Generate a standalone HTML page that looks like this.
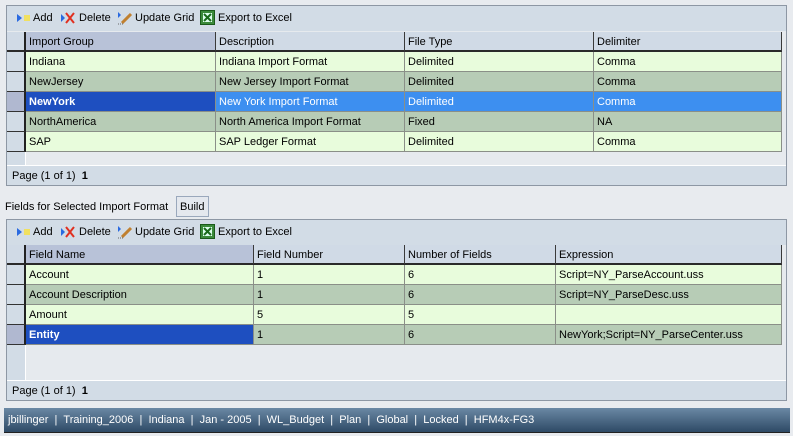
<!DOCTYPE html>
<html><head><style>
*{margin:0;padding:0;box-sizing:border-box}
body{width:793px;height:436px;background:#e8ebef;font-family:"Liberation Sans",sans-serif;font-size:11px;color:#000;position:relative;overflow:hidden}
.a{position:absolute}
.panel{position:absolute;left:6px;width:781px;border:1px solid #8d97a4;background:#e6eaee}
.tb{position:absolute;left:0;right:0;top:0;height:25px;background:#d2dce6}
.tb span{position:absolute;top:6px;font-size:11px}
.tb svg{margin-top:1px}
.foot{position:absolute;left:0;right:0;bottom:0;height:20px;background:#d2dce6;border-top:1px solid #fff}
.foot span{position:absolute;left:5px;top:4px}
.sel{position:absolute;left:0;width:19px;background:#d2dce6;border-right:1px solid #fff}
.c{position:absolute;height:20px;border-right:1px solid #8a8f88;border-bottom:1px solid #8a8f88;padding:4px 0 0 3px;white-space:nowrap;overflow:hidden}
.h{background:#d0dae6;border-right:1px solid #3a3a3a;border-bottom:2px solid #2a2a2a}
.rs{position:absolute;left:0;width:19px;height:20px;background:#d2dce6;border-right:2px solid #222;border-bottom:1px solid #333}
.g1{background:#e8fcdc}.g2{background:#b7ccb6}
</style></head><body>

<div class="panel" style="top:5px;height:181px">
  <div class="tb">
    <svg class="a" style="left:10px;top:6px" width="14" height="10"><path d="M0 1L5 5L0 9Z" fill="#2a6ae0"/><rect x="7" y="2" width="6" height="6" fill="#f0e060"/></svg>
    <span style="left:26px">Add</span>
    <svg class="a" style="left:54px;top:5px" width="14" height="12"><path d="M0 2L4 6L0 10Z" fill="#2a6ae0"/><path d="M5 1L13 11M13 1L5 11" stroke="#e03020" stroke-width="2"/></svg>
    <span style="left:72px">Delete</span>
    <svg class="a" style="left:110px;top:4px" width="16" height="14"><path d="M1 1L4 4L1 7Z" fill="#2a6ae0"/><path d="M5 12L14 3" stroke="#c08030" stroke-width="3"/><path d="M1 13h6" stroke="#666" stroke-dasharray="1 1"/></svg>
    <span style="left:128px">Update Grid</span>
    <svg class="a" style="left:193px;top:3px" width="15" height="15"><rect x="0.5" y="0.5" width="14" height="14" fill="#3a8a3a" stroke="#1a5a1a"/><rect x="3" y="3" width="9" height="9" fill="#dfe"/><path d="M4 4L11 11M11 4L4 11" stroke="#1a6a1a" stroke-width="2"/></svg>
    <span style="left:211px">Export to Excel</span>
  </div>
  <div class="sel" style="top:26px;height:133px"></div>
  <div class="c h" style="top:26px;left:0;width:19px;border-right:2px solid #222"></div>
  <div class="c h" style="top:26px;left:19px;width:190px;background:#b8c2d8">Import Group</div>
  <div class="c h" style="top:26px;left:209px;width:189px">Description</div>
  <div class="c h" style="top:26px;left:398px;width:189px">File Type</div>
  <div class="c h" style="top:26px;left:587px;width:188px">Delimiter</div>

  <div class="rs" style="top:46px"></div>
  <div class="c g1" style="top:46px;left:19px;width:190px">Indiana</div>
  <div class="c g1" style="top:46px;left:209px;width:189px">Indiana Import Format</div>
  <div class="c g1" style="top:46px;left:398px;width:189px">Delimited</div>
  <div class="c g1" style="top:46px;left:587px;width:188px">Comma</div>

  <div class="rs" style="top:66px"></div>
  <div class="c g2" style="top:66px;left:19px;width:190px">NewJersey</div>
  <div class="c g2" style="top:66px;left:209px;width:189px">New Jersey Import Format</div>
  <div class="c g2" style="top:66px;left:398px;width:189px">Delimited</div>
  <div class="c g2" style="top:66px;left:587px;width:188px">Comma</div>

  <div class="rs" style="top:86px;background:#b0b8d0"></div>
  <div class="c" style="top:86px;left:19px;width:190px;background:#1e4fc0;color:#fff;font-weight:bold">NewYork</div>
  <div class="c" style="top:86px;left:209px;width:189px;background:#3d8ff0;color:#fff">New York Import Format</div>
  <div class="c" style="top:86px;left:398px;width:189px;background:#3d8ff0;color:#fff">Delimited</div>
  <div class="c" style="top:86px;left:587px;width:188px;background:#3d8ff0;color:#fff">Comma</div>

  <div class="rs" style="top:106px"></div>
  <div class="c g2" style="top:106px;left:19px;width:190px">NorthAmerica</div>
  <div class="c g2" style="top:106px;left:209px;width:189px">North America Import Format</div>
  <div class="c g2" style="top:106px;left:398px;width:189px">Fixed</div>
  <div class="c g2" style="top:106px;left:587px;width:188px">NA</div>

  <div class="rs" style="top:126px"></div>
  <div class="c g1" style="top:126px;left:19px;width:190px">SAP</div>
  <div class="c g1" style="top:126px;left:209px;width:189px">SAP Ledger Format</div>
  <div class="c g1" style="top:126px;left:398px;width:189px">Delimited</div>
  <div class="c g1" style="top:126px;left:587px;width:188px">Comma</div>

  <div class="foot"><span>Page (1 of 1) &nbsp;<b>1</b></span></div>
</div>

<div class="a" style="left:5px;top:201px">Fields for Selected Import Format</div>
<div class="a" style="left:176px;top:196px;width:33px;height:21px;background:#e4e8ee;border:1px solid #9aa8bc;padding:4px 0 0 3px">Build</div>

<div class="panel" style="top:219px;height:182px">
  <div class="tb">
    <svg class="a" style="left:10px;top:6px" width="14" height="10"><path d="M0 1L5 5L0 9Z" fill="#2a6ae0"/><rect x="7" y="2" width="6" height="6" fill="#f0e060"/></svg>
    <span style="left:26px">Add</span>
    <svg class="a" style="left:54px;top:5px" width="14" height="12"><path d="M0 2L4 6L0 10Z" fill="#2a6ae0"/><path d="M5 1L13 11M13 1L5 11" stroke="#e03020" stroke-width="2"/></svg>
    <span style="left:72px">Delete</span>
    <svg class="a" style="left:110px;top:4px" width="16" height="14"><path d="M1 1L4 4L1 7Z" fill="#2a6ae0"/><path d="M5 12L14 3" stroke="#c08030" stroke-width="3"/><path d="M1 13h6" stroke="#666" stroke-dasharray="1 1"/></svg>
    <span style="left:128px">Update Grid</span>
    <svg class="a" style="left:193px;top:3px" width="15" height="15"><rect x="0.5" y="0.5" width="14" height="14" fill="#3a8a3a" stroke="#1a5a1a"/><rect x="3" y="3" width="9" height="9" fill="#dfe"/><path d="M4 4L11 11M11 4L4 11" stroke="#1a6a1a" stroke-width="2"/></svg>
    <span style="left:211px">Export to Excel</span>
  </div>
  <div class="sel" style="top:25px;height:135px"></div>
  <div class="c h" style="top:25px;left:0;width:19px;border-right:2px solid #222"></div>
  <div class="c h" style="top:25px;left:19px;width:228px;background:#b8c2d8">Field Name</div>
  <div class="c h" style="top:25px;left:247px;width:151px">Field Number</div>
  <div class="c h" style="top:25px;left:398px;width:151px">Number of Fields</div>
  <div class="c h" style="top:25px;left:549px;width:226px">Expression</div>

  <div class="rs" style="top:45px"></div>
  <div class="c g1" style="top:45px;left:19px;width:228px">Account</div>
  <div class="c g1" style="top:45px;left:247px;width:151px">1</div>
  <div class="c g1" style="top:45px;left:398px;width:151px">6</div>
  <div class="c g1" style="top:45px;left:549px;width:226px">Script=NY_ParseAccount.uss</div>

  <div class="rs" style="top:65px"></div>
  <div class="c g2" style="top:65px;left:19px;width:228px">Account Description</div>
  <div class="c g2" style="top:65px;left:247px;width:151px">1</div>
  <div class="c g2" style="top:65px;left:398px;width:151px">6</div>
  <div class="c g2" style="top:65px;left:549px;width:226px">Script=NY_ParseDesc.uss</div>

  <div class="rs" style="top:85px"></div>
  <div class="c g1" style="top:85px;left:19px;width:228px">Amount</div>
  <div class="c g1" style="top:85px;left:247px;width:151px">5</div>
  <div class="c g1" style="top:85px;left:398px;width:151px">5</div>
  <div class="c g1" style="top:85px;left:549px;width:226px"></div>

  <div class="rs" style="top:105px;background:#b0b8d0"></div>
  <div class="c" style="top:105px;left:19px;width:228px;background:#1e4fc0;color:#fff;font-weight:bold">Entity</div>
  <div class="c g2" style="top:105px;left:247px;width:151px">1</div>
  <div class="c g2" style="top:105px;left:398px;width:151px">6</div>
  <div class="c g2" style="top:105px;left:549px;width:226px">NewYork;Script=NY_ParseCenter.uss</div>

  <div class="foot"><span>Page (1 of 1) &nbsp;<b>1</b></span></div>
</div>

<div class="a" style="left:4px;top:408px;width:786px;height:25px;background:linear-gradient(#6a88a4,#2e4a66);color:#fff;padding:6px 0 0 4px;white-space:nowrap;border-bottom:1px solid #222">jbillinger &nbsp;| &nbsp;Training_2006 &nbsp;| &nbsp;Indiana &nbsp;| &nbsp;Jan - 2005 &nbsp;| &nbsp;WL_Budget &nbsp;| &nbsp;Plan &nbsp;| &nbsp;Global &nbsp;| &nbsp;Locked &nbsp;| &nbsp;HFM4x-FG3</div>
</body></html>
